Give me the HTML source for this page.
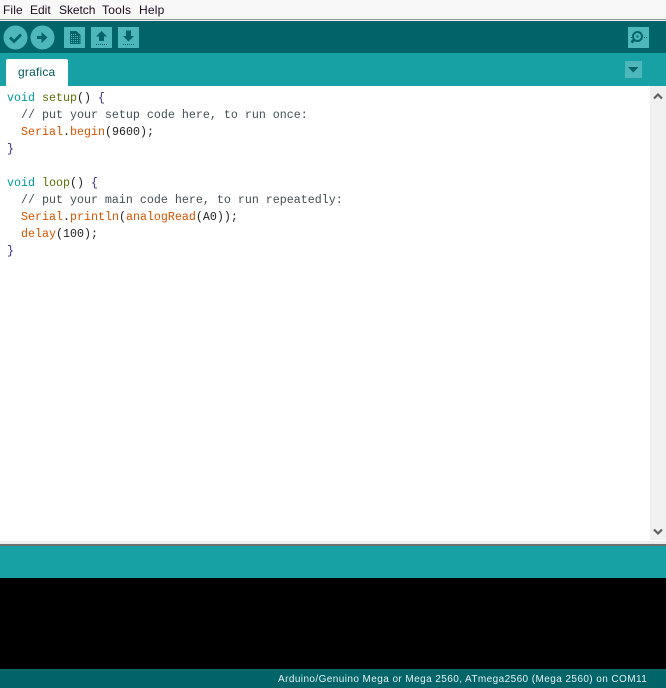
<!DOCTYPE html>
<html><head><meta charset="utf-8"><style>
html,body{margin:0;padding:0;background:#fff}
#r{position:relative;width:666px;height:688px;overflow:hidden;font-family:"Liberation Sans",sans-serif}
#r>div,#r>svg{position:absolute}
.m{position:absolute;top:2px;font-size:12px;line-height:16px;color:#1a0a1a}
.l{position:absolute;left:7px;height:17px;line-height:17px;font-family:"Liberation Mono",monospace;font-size:11.67px;white-space:pre;color:#222}
.k{color:#00979c}.f{color:#5e6d03}.o{color:#d35400}.c{color:#434f54}.b{color:#3a2a8a}
</style></head><body><div id="r">
<div style="left:0;top:0;width:666px;height:19px;background:#f8f8f8">
<span class="m" style="left:3px;letter-spacing:.1px">File</span><span class="m" style="left:30px">Edit</span><span class="m" style="left:59px;letter-spacing:-.05px">Sketch</span><span class="m" style="left:102px;letter-spacing:.25px">Tools</span><span class="m" style="left:139px;letter-spacing:.2px">Help</span></div>
<div style="left:0;top:19px;width:666px;height:1px;background:#8f9a9b"></div>
<div style="left:0;top:20px;width:666px;height:1px;background:#f0f0f0"></div>
<div style="left:0;top:21px;width:666px;height:32px;background:#006468"></div>
<div style="left:0;top:53px;width:666px;height:33px;background:#17a1a5"></div>
<svg style="left:0;top:21px" width="666" height="32" viewBox="0 0 666 32">
<circle cx="15.5" cy="16.500" r="12" fill="#4db7bb"/><path d="M10 16.500l4 4 7-7" fill="none" stroke="#006468" stroke-width="2.800"/>
<circle cx="42.5" cy="16.500" r="12" fill="#4db7bb"/><path d="M37 15h4.500v-4l6 5.500-6 5.500v-4H37z" fill="#006468"/>
<rect x="64" y="6" width="21" height="21" fill="#4db7bb"/><path d="M70 10h6.500l4 4v9H70z" fill="#006468"/><path d="M71 13.500h5M71 15.500h8.500M71 17.500h8.500M71 19.500h8.500M71 21.500h8.500" stroke="#4db7bb" stroke-width="1" stroke-dasharray="1 1"/>
<rect x="91" y="6" width="21" height="21" fill="#4db7bb"/><path d="M101.500 10l5.500 5.500h-3V20h-5v-4.500h-3z" fill="#006468"/><path d="M96 23.500h11" stroke="#006468" stroke-dasharray="1 1"/>
<rect x="118" y="6" width="21" height="21" fill="#4db7bb"/><path d="M126 9.500h5V15h3l-5.500 5.500L123 15h3z" fill="#006468"/><path d="M123 23.500h11" stroke="#006468" stroke-dasharray="1 1"/>
<rect x="628" y="6" width="21" height="21" fill="#4db7bb"/><circle cx="637.500" cy="15.500" r="4.500" fill="none" stroke="#006468" stroke-width="2"/><rect x="636.500" y="14.500" width="2" height="2" fill="#006468"/><path d="M634 19l-2.500 2.500" stroke="#006468" stroke-width="2.800"/><path d="M631 16.500h1.500M644 16.500h3" stroke="#006468" stroke-dasharray="1 1"/>
</svg>
<div style="left:6px;top:59px;width:62px;height:27px;background:#fff;border-radius:2px 2px 0 0"></div>
<div style="left:18px;top:64px;font-size:12px;line-height:16px;letter-spacing:.2px;color:#00585c">grafica</div>
<svg style="left:625px;top:61px" width="17" height="17"><rect width="17" height="17" fill="#4db7bb"/><path d="M3 6h10.500l-5.250 5.500z" fill="#006468"/></svg>
<div style="left:650px;top:86px;width:16px;height:454px;background:#f0f0f0"></div>
<svg style="left:650px;top:86px" width="16" height="458"><path d="M4 12.500l4-4 4 4" fill="none" stroke="#606060" stroke-width="2.200"/><path d="M4 443.500l4 4 4-4" fill="none" stroke="#606060" stroke-width="2.200"/></svg>
<div class="l" style="top:90px"><span class="k">void</span> <span class="f">setup</span>() <span class="b">{</span></div>
<div class="l" style="top:107px"><span class="c">  // put your setup code here, to run once:</span></div>
<div class="l" style="top:124px">  <span class="o">Serial</span>.<span class="o">begin</span>(9600);</div>
<div class="l" style="top:141px"><span class="b">}</span></div>
<div class="l" style="top:175px"><span class="k">void</span> <span class="f">loop</span>() <span class="b">{</span></div>
<div class="l" style="top:192px"><span class="c">  // put your main code here, to run repeatedly:</span></div>
<div class="l" style="top:209px">  <span class="o">Serial</span>.<span class="o">println</span>(<span class="o">analogRead</span>(A0));</div>
<div class="l" style="top:226px">  <span class="o">delay</span>(100);</div>
<div class="l" style="top:243px"><span class="b">}</span></div>
<div style="left:0;top:541px;width:666px;height:3px;background:#eeeeee"></div>
<div style="left:0;top:544px;width:666px;height:2px;background:#6f6f6f"></div>
<div style="left:0;top:546px;width:666px;height:32px;background:#17a1a5"></div>
<div style="left:0;top:578px;width:666px;height:91px;background:#000"></div>
<div style="left:0;top:669px;width:666px;height:19px;background:#006468"></div>
<div style="left:278px;top:673px;font-size:10px;line-height:14px;letter-spacing:.42px;white-space:nowrap;color:#e8f2f2">Arduino/Genuino Mega or Mega 2560, ATmega2560 (Mega 2560) on COM11</div>
</div></body></html>
